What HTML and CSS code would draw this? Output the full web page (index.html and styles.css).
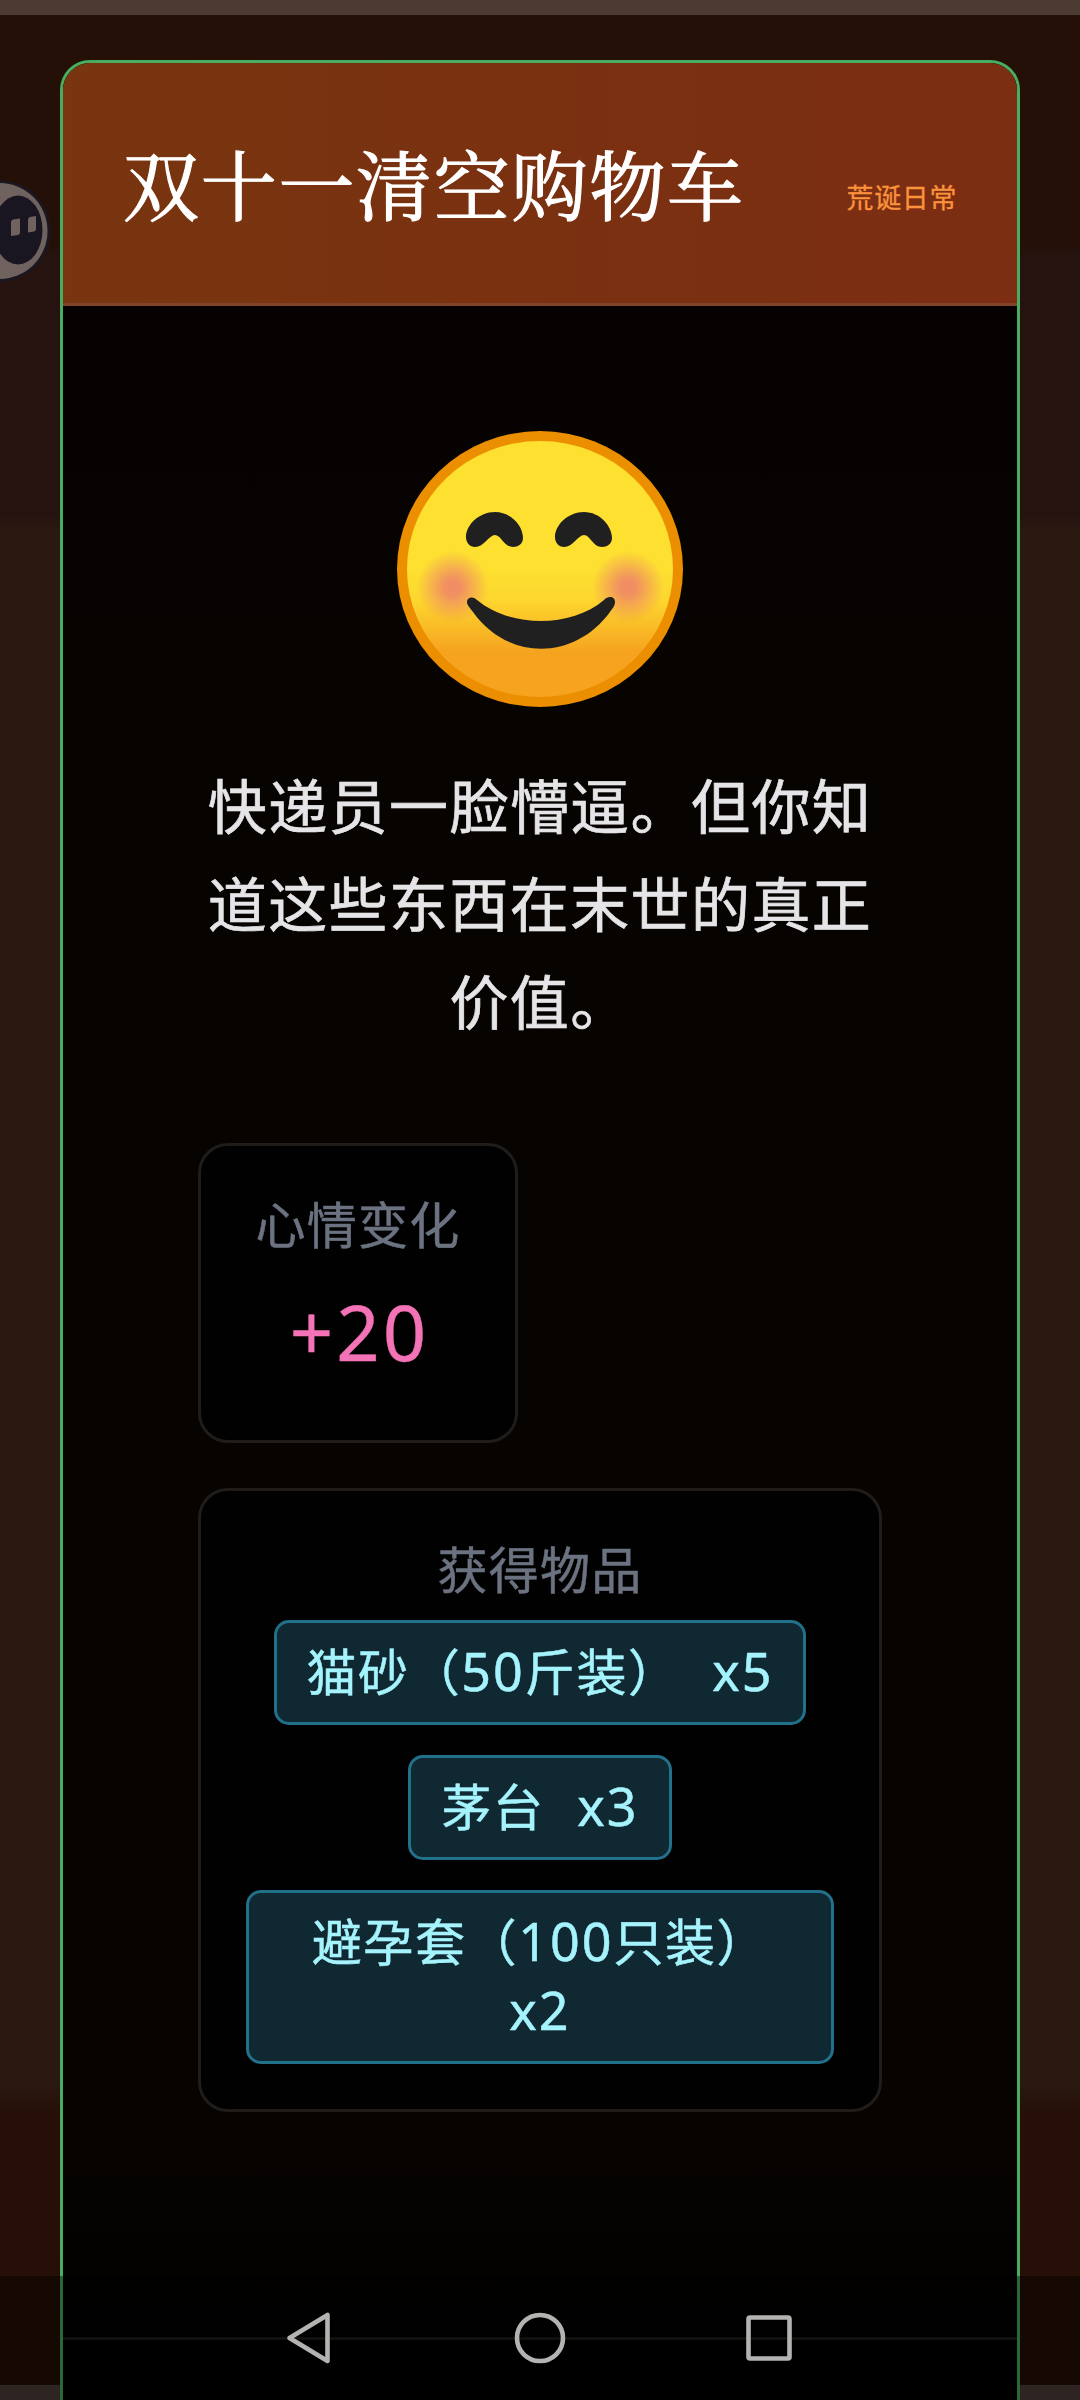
FILE: index.html
```html
<!DOCTYPE html>
<html lang="zh-CN">
<head>
<meta charset="utf-8">
<title>双十一清空购物车</title>
<link rel="stylesheet" href="styles.css">
</head>
<body>
<div class="screen">
  <svg class="floating" width="54" height="102" viewBox="0 0 54 102">
    <circle cx="0" cy="51" r="50.500" fill="#1b1720"/>
    <circle cx="-.5" cy="51" r="48" fill="#70625e"/>
    <ellipse cx="18" cy="50" rx="24.500" ry="34.500" fill="#1a1621"/>
    <path d="M11 42q0-2 2-2.500l7-1v14q0 2-2 2.500l-7 1zM28 39.500q0-2 2-2.500l6-1v13q0 2-2 2.500l-6 1z" fill="#70625e"/>
  </svg>
  <main class="modal">
    <header class="head">
      <h1 class="title">双十一清空购物车</h1>
      <span class="tag">荒诞日常</span>
    </header>
    <section class="content">
      <svg class="emoji" width="286" height="276" viewBox="0 0 286 276">
        <defs>
          <linearGradient id="face" x1="0" y1="0" x2="0" y2="1">
            <stop offset=".5" stop-color="#fde030"/><stop offset=".62" stop-color="#fdd72e"/><stop offset=".82" stop-color="#f6a420"/><stop offset="1" stop-color="#f6a420"/>
          </linearGradient>
          <radialGradient id="blush">
            <stop offset="0" stop-color="#f08a66"/><stop offset=".25" stop-color="#f08a66" stop-opacity=".9"/><stop offset="1" stop-color="#f08a66" stop-opacity="0"/>
          </radialGradient>
        </defs>
        <ellipse cx="143" cy="138" rx="143" ry="138" fill="#eb8f00"/>
        <ellipse cx="143" cy="138" rx="133" ry="128" fill="url(#face)"/>
        <circle cx="56" cy="156" r="36" fill="url(#blush)"/>
        <circle cx="231" cy="156" r="36" fill="url(#blush)"/>
        <g fill="#202020">
          <path d="M69 106C69 94 82 81 98 81s28 14 28 26c0 6-5 9-10 9-9 0-12-12-18-12s-11 12-20 12c-5 0-9-4-9-10z"/>
          <path d="M158 106c0-12 13-25 29-25s28 14 28 26c0 6-5 9-10 9-9 0-12-12-18-12s-11 12-20 12c-5 0-9-4-9-10z"/>
          <path d="M70 171c0-5 6-6 10-2 34 28 94 28 127 0 5-5 11-3 11 2 0 4-3 7-5 10-36 49-102 49-137 0-3-4-6-7-6-10z"/>
        </g>
      </svg>
      <p class="story">快递员一脸懵逼。但你知道这些东西在末世的真正价值。</p>
      <div class="card mood">
        <div class="label">心情变化</div>
        <div class="delta">+20</div>
      </div>
      <div class="card items">
        <div class="label">获得物品</div>
        <div class="chips">
          <div class="chip">猫砂（<span class="num">50</span>斤装） <span class="num qty">x5</span></div>
          <div class="chip">茅台 <span class="num qty">x3</span></div>
          <div class="chip">避孕套（<span class="num">100</span>只装） <span class="num">x2</span></div>
        </div>
      </div>
    </section>
    <footer class="foot"></footer>
  </main>
  <nav class="nav">
    <svg width="1080" height="124" viewBox="0 0 1080 124" fill="none" stroke="#b5b3b1" stroke-width="4.600" stroke-linejoin="round">
      <path d="M289.500 62L327.500 39V85Z"/>
      <circle cx="540" cy="62" r="23"/>
      <rect x="748.500" y="41.500" width="41" height="41" rx="1.500"/>
    </svg>
  </nav>
</div>
</body>
</html>
```
FILE: styles.css
```css
* { box-sizing: border-box; }
body { margin: 0; background: #241007; font-family: "Noto Sans", "Noto Sans CJK SC", sans-serif; }
.screen {
  position: relative; width: 1080px; height: 2400px; overflow: hidden; padding: 60px 60px 0;
  background: linear-gradient(#4d3a33 0 15px, #241007 15px 245px, #26130f 255px 515px, #2a1811 530px 2085px, #250f06 2115px 2385px, #4d3d39 2385px);
}
.floating { position: absolute; left: 0; top: 180px; }
.modal {
  height: 2400px; border: 3px solid #48ad60; border-radius: 30px; overflow: hidden;
  background: linear-gradient(#050202, #070301 600px, #060301 2100px, #020101 2300px);
}
.head {
  display: flex; justify-content: space-between; align-items: center; height: 243px; padding: 0 60px;
  border-bottom: 3px solid #81442b; background: linear-gradient(90deg, #78350f, #7c2d12);
}
.title { margin: 0; font: 400 76px/100px "Noto Serif CJK SC", "Noto Serif SC", "Source Han Serif SC", serif; letter-spacing: 1.7px; color: #fff; -webkit-text-stroke: 1.2px #fff; }
.tag { margin-top: 29px; font-size: 27px; line-height: 40px; letter-spacing: .6px; color: #fb923c; -webkit-text-stroke: .3px; }
.content { display: flex; flex-direction: column; height: 2031px; padding: 125px 135px 0; align-items: flex-start; }
.emoji { align-self: center; }
.story { margin: 50px 0 0; width: 684px; text-align: center; font-size: 59px; line-height: 98px; letter-spacing: 1.4px; color: #e5e5e8; -webkit-text-stroke: .7px; }
.card { border: 3px solid #1f1c1a; border-radius: 30px; background: #020101; padding: 45px; text-align: center; }
.mood { width: 320px; height: 300px; margin-top: 92px; }
.items { width: 684px; margin-top: 45px; }
.label { font-size: 50px; line-height: 69px; letter-spacing: 1.200px; color: #6b7280; -webkit-text-stroke: .5px; }
.delta { margin-top: 12px; padding-left: 3px; font-size: 76px; line-height: 120px; letter-spacing: 3px; color: #f472b6; -webkit-text-stroke: .4px; }
.chips { display: flex; flex-direction: column; align-items: center; gap: 30px; margin-top: 15px; }
.chip { height: 105px; border: 3px solid #22718a; border-radius: 15px; background: #102832; padding: 15px 30px; font-size: 50px; line-height: 69px; letter-spacing: 1.600px; color: #a5f3fc; -webkit-text-stroke: .5px; }
.chip:last-child { height: 174px; }
.num { font-size: 52px; line-height: 1; letter-spacing: 2px; }
.qty { margin-left: 18px; }
.foot { border-top: 3px solid #1f1d1c; }
.nav { position: absolute; left: 0; bottom: 0; width: 1080px; height: 124px; background: rgba(0, 0, 0, .4); }
.nav svg { display: block; }
```
